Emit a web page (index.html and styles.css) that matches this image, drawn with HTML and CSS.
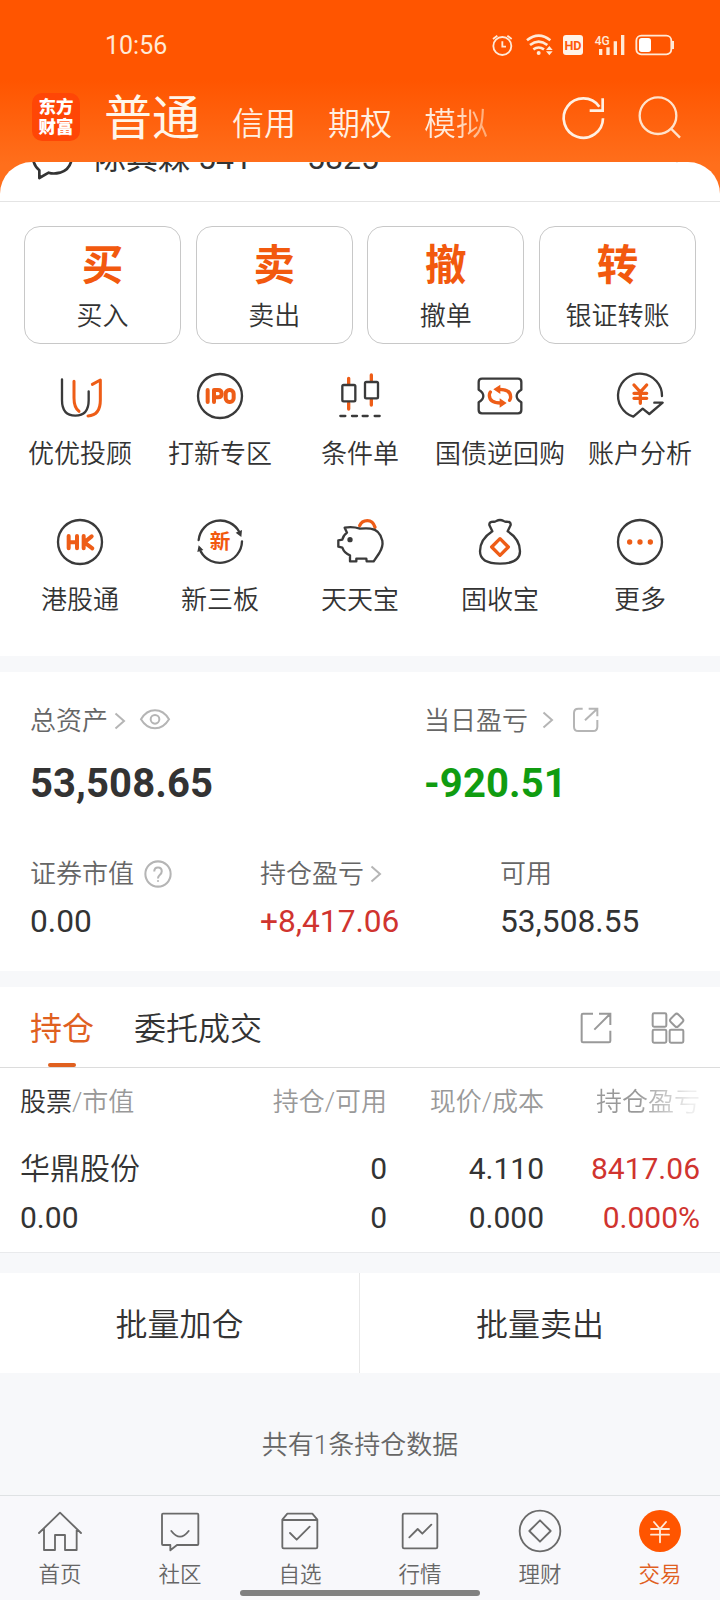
FILE: index.html
```html
<!DOCTYPE html>
<html lang="zh-CN">
<head>
<meta charset="utf-8">
<title>交易</title>
<link rel="stylesheet" href="styles.css">
</head>
<body>
<div class="phone">
  <header class="top">
    <div class="status">
      <span class="time">10:56</span>
      <svg class="status-icons" viewBox="390 90 570 90" fill="none" stroke="#ffe9d6" stroke-width="5.5">
        <circle cx="427" cy="138" r="27"/><path d="M427 124v16h11M399 117l13-10M455 117l-13-10" />
        <path d="M501 121q35-28 70 0M510 135q26-20 52 0M520 148q16-11 32 0" stroke-width="8"/>
        <circle cx="536" cy="159" r="6" fill="#ffe9d6" stroke="none"/>
        <path d="M558 150l10-12 10 12zM558 154l10 12 10-12z" fill="#ffe9d6" stroke="none"/>
        <rect x="609" y="105" width="60" height="60" rx="9" fill="#fff3e8" stroke="none"/>
        <text class="hd" x="639" y="150" text-anchor="middle">HD</text>
        <text class="g4" x="704" y="135">4G</text>
        <path d="M722 147v18M744 142v23M766 124v41M788 105v60" stroke-width="10"/>
        <rect x="829" y="107" width="105" height="56" rx="15"/>
        <rect x="837" y="114" width="36" height="42" rx="8" fill="#fff" stroke="none"/>
        <path d="M939 123v24" stroke-width="6"/>
      </svg>
    </div>
    <nav class="nav">
      <div class="logo"><span>东方</span><span>财富</span></div>
      <div class="modes">
        <span class="mode active">普通</span><span class="mode">信用</span><span class="mode">期权</span><span class="mode fade">模拟</span>
      </div>
      <svg class="nav-icon refresh" viewBox="600 280 150 150" fill="none" stroke="#fff0e2" stroke-width="8">
        <path d="M729 353A59 59 0 1 1 718 318M689 330h39v-37"/>
      </svg>
      <svg class="nav-icon" viewBox="825 280 150 150" fill="none" stroke="#ffe2cb" stroke-width="7">
        <circle cx="894" cy="345" r="55"/><path d="M933 384l27 27"/>
      </svg>
    </nav>
  </header>

  <main class="sheet">
    <div class="account">
      <svg class="chat" viewBox="90 390 132 150" fill="none" stroke="#333" stroke-width="8">
        <path d="M118 531v-23Q98 492 98 460Q98 400 156 400Q216 400 216 460Q216 505 180 515Q160 520 146 515z" stroke-linejoin="round"/>
      </svg>
      <span class="account-name">陈其森 541****5825</span>
      <svg class="down" viewBox="0 0 20 12" fill="none" stroke="#555" stroke-width="2"><path d="M1 1l9 9 9-9"/></svg>
    </div>

    <section class="actions">
      <div class="action"><b>买</b><span>买入</span></div>
      <div class="action"><b>卖</b><span>卖出</span></div>
      <div class="action"><b>撤</b><span>撤单</span></div>
      <div class="action"><b>转</b><span>银证转账</span></div>
    </section>

    <section class="tools">
      <div class="tool">
        <svg viewBox="165 483 150 150"><path class="k" d="M186 508v63q0 46 40 46 40 0 40-46v-27"/><path class="o" d="M222 514v50q0 29 15 40M264 618q37-2 37-47v-61l-24 13"/></svg>
        <span>优优投顾</span>
      </div>
      <div class="tool">
        <svg viewBox="585 483 150 150"><circle class="k" cx="660" cy="558" r="66"/><path class="o bold" d="M623 540v36M642 576v-36h12q11 0 11 11t-11 11h-12"/><rect class="o bold" x="677" y="540" width="24" height="36" rx="11"/></svg>
        <span>打新专区</span>
      </div>
      <div class="tool">
        <svg viewBox="1005 483 150 150"><path class="o fat" d="M1046 505v18M1046 579v18M1114 495v16M1114 569v16"/><rect class="k" x="1027" y="525" width="39" height="49" rx="4"/><rect class="k" x="1095" y="516" width="39" height="49" rx="4"/><path class="k" d="M1021 618h15M1056 618h15M1088 618h15M1124 618h15"/></svg>
        <span>条件单</span>
      </div>
      <div class="tool">
        <svg viewBox="345 483 150 150"><path class="k" d="M366 506h108q10 0 10 10v23q-14 8-14 19t14 19v23q0 10-10 10H366q-10 0-10-10v-23q14-8 14-19t-14-19v-23q0-10 10-10z"/><path class="o fat" d="M418 538q34 0 34 23 0 6-3 10M422 579q-34 0-34-23 0-6 3-10"/><path class="of" d="M421 524v28l-21-14zM419 565v28l21-14z"/></svg>
        <span>国债逆回购</span>
      </div>
      <div class="tool">
        <svg viewBox="765 483 150 150"><path class="k" d="M906 558a66 66 0 1 0-86 62l28-24 20 16 40-34h-25"/><path class="o fat" d="M822 525l19 21 19-21M822 550h38M822 565h38M841 547v33"/></svg>
        <span>账户分析</span>
      </div>
      <div class="tool">
        <svg viewBox="165 111 150 150"><circle class="k" cx="240" cy="186" r="66"/><path class="o bold" d="M206 168v37M206 187h25M231 168v37M251 168v37M275 169l-22 18 24 18"/></svg>
        <span>港股通</span>
      </div>
      <div class="tool">
        <svg viewBox="585 111 150 150"><path class="k" d="M596 180a65 65 0 0 1 122-24M726 184a66 66 0 0 1-124 30"/><path class="kf" d="M707 158l19-8-2 21zM592 216l4-20 14 14z"/><text class="xin" x="660" y="208" text-anchor="middle">新</text></svg>
        <span>新三板</span>
      </div>
      <div class="tool">
        <svg viewBox="1005 111 150 150"><path class="o fat" d="M1079 137q6-15 23-15t23 20"/><path class="k" d="M1080 146Q1058 139 1034 143L1041 158Q1029 167 1027 179L1015 181V200L1027 203Q1033 220 1050 226V244H1069V236H1099L1100 244H1121L1138 219Q1150 200 1147 182Q1140 150 1112 146Q1100 144 1080 146z"/><circle class="kf" cx="1050" cy="179" r="8"/></svg>
        <span>天天宝</span>
      </div>
      <div class="tool">
        <svg viewBox="345 111 150 150"><path class="k" d="M397 154l-9-19q-1-10 12-10 6 1 9-2 11-6 22 0 3 3 9 2 13 0 12 10l-9 19q37 24 37 60 0 37-60 37t-60-37q0-36 37-60z"/><path class="o fat" d="M420 176l25 25-25 25-25-25z"/></svg>
        <span>固收宝</span>
      </div>
      <div class="tool">
        <svg viewBox="765 111 150 150"><circle class="k" cx="840" cy="186" r="66"/><circle class="of" cx="809" cy="186" r="8"/><circle class="of" cx="840" cy="186" r="8"/><circle class="of" cx="871" cy="186" r="8"/></svg>
        <span>更多</span>
      </div>
    </section>

    <div class="band"></div>

    <section class="assets">
      <div class="asset-row two">
        <div>
          <div class="label">总资产<svg class="chev" viewBox="0 0 12 18"><path d="M1.5 1.5L10 9 1.5 16.5"/></svg><svg class="eye" viewBox="420 83 96 69"><path d="M426 117q16-27 42-27t42 27q-16 27-42 27t-42-27z"/><circle cx="468" cy="117" r="13"/></svg></div>
          <div class="big">53,508.65</div>
        </div>
        <div>
          <div class="label">当日盈亏<svg class="chev wide" viewBox="0 0 12 18"><path d="M1.5 1.5L10 9 1.5 16.5"/></svg><svg class="share-sm" viewBox="637 78 84 84"><path d="M669 86h-13q-13 0-13 13v41q0 13 13 13h44q13 0 13-13v-20M687 86h26v23M676 121l36-34"/></svg></div>
          <div class="big green">-920.51</div>
        </div>
      </div>
      <div class="asset-row three">
        <div>
          <div class="label">证券市值<svg class="help" viewBox="433 538 82 82"><circle cx="474" cy="579" r="37"/><path d="M463 572q0-12 11-12t11 11q0 6-6 11-5 4-5 10M474 597v5"/></svg></div>
          <div class="num">0.00</div>
        </div>
        <div>
          <div class="label">持仓盈亏<svg class="chev" viewBox="0 0 12 18"><path d="M1.5 1.5L10 9 1.5 16.5"/></svg></div>
          <div class="num red">+8,417.06</div>
        </div>
        <div>
          <div class="label">可用</div>
          <div class="num">53,508.55</div>
        </div>
      </div>
    </section>

    <div class="band"></div>

    <section class="holdings">
      <div class="tabs">
        <span class="tab on">持仓</span><span class="tab">委托成交</span>
        <svg class="tab-icon" viewBox="660 120 96 99"><path d="M699 128h-30q-4 0-4 4v78q0 4 4 4h78q4 0 4-4v-31M717 128h34v34M703 176l47-47"/></svg>
        <svg class="tab-icon grid" viewBox="873 122 102 99"><rect x="878" y="129" width="41" height="40" rx="4"/><rect x="878" y="178" width="41" height="39" rx="4"/><rect x="929" y="178" width="41" height="39" rx="4"/><rect x="934" y="134" width="32" height="32" rx="7" transform="rotate(45 950 150)"/></svg>
      </div>
      <div class="grid-row head">
        <span><em>股票</em>/市值</span><span>持仓/可用</span><span>现价/成本</span><span class="fade-head">持仓盈亏</span>
      </div>
      <div class="grid-row first"><span class="name">华鼎股份</span><span>0</span><span>4.110</span><span class="red">8417.06</span></div>
      <div class="grid-row"><span>0.00</span><span>0</span><span>0.000</span><span class="red">0.000%</span></div>
    </section>

    <div class="band tall"></div>
    <section class="batch"><span>批量加仓</span><span>批量卖出</span></section>
    <div class="summary">共有1条持仓数据</div>
  </main>

  <footer class="tabbar">
    <div class="item"><svg viewBox="114 87 132 132"><path d="M117 159l63-61 63 61M132 146v64h33v-45h30v45h35v-64"/></svg><span>首页</span></div>
    <div class="item"><svg viewBox="474 87 132 132"><path d="M489 101h103q3 0 3 3v88q0 3-3 3h-61l-20 16v-16h-22q-3 0-3-3v-88q0-3 3-3zM514 153q26 34 52 0"/></svg><span>社区</span></div>
    <div class="item"><svg viewBox="834 87 132 132"><path d="M847 119l15-18h75l15 18v82q0 4-4 4h-97q-4 0-4-4zM847 120h105M870 159l20 20 39-39"/></svg><span>自选</span></div>
    <div class="item"><svg viewBox="114 87 132 132"><rect x="128" y="101" width="104" height="104" rx="4"/><path d="M148 172l25-25 14 14 27-27"/></svg><span>行情</span></div>
    <div class="item"><svg viewBox="474 87 132 132"><circle cx="540" cy="153" r="61"/><path d="M540 121l32 32-32 32-32-32z"/></svg><span>理财</span></div>
    <div class="item current"><svg viewBox="834 87 132 132"><circle class="disc" cx="900" cy="153" r="63"/><path class="yen" d="M882 126l18 21 18-21M873 147h54M873 164h54M900 147v40"/></svg><span>交易</span></div>
    <div class="home-bar"></div>
  </footer>
</div>
</body>
</html>
```
FILE: styles.css
```css
* { box-sizing: border-box; }
body {
  margin: 0;
  font-family: Roboto, "Noto Sans CJK SC", sans-serif;
  font-weight: 350;
  color: #333;
}
svg { display: block; flex: none; }
.phone {
  width: 720px;
  height: 1600px;
  overflow: hidden;
  display: flex;
  flex-direction: column;
  background: linear-gradient(#ff5500 80px, #ff6f1c 165px, #ff6f1c 200px) no-repeat #f7f8fa;
  background-size: 100% 220px;
}

/* Status bar and account mode switcher */
.top { height: 162px; flex: none; }
.status {
  height: 90px;
  padding: 0 40px 0 105px;
  display: flex;
  align-items: center;
  justify-content: space-between;
}
.time { font-size: 25px; font-weight: 400; color: #ffe9d6; }
.status-icons { width: 190px; height: 30px; }
.hd { font: 700 38px Roboto, sans-serif; fill: #ff5a08; stroke: none; }
.g4 { font: 500 36px Roboto, sans-serif; fill: #ffe9d6; stroke: none; }
.nav { height: 72px; display: flex; align-items: center; padding: 0 35px 0 32px; }
.logo {
  width: 48px;
  height: 48px;
  margin-top: -18px;
  border-radius: 10px;
  background: #ff4606;
  color: #fff;
  display: flex;
  flex-direction: column;
  align-items: center;
  justify-content: center;
  font-size: 17.5px;
  font-weight: 900;
  line-height: 20px;
}
.modes {
  display: flex;
  align-items: baseline;
  gap: 32px;
  margin: -9px auto 0 24px;
  color: #fff0e2;
  line-height: 60px;
}
.mode { font-size: 32px; }
.mode.active { font-size: 48px; font-weight: 400; color: #fff6ea; }
.mode.fade {
  background: linear-gradient(90deg, #ffeada 45%, #ffa66f);
  background-clip: text;
  -webkit-background-clip: text;
  color: transparent;
}
.nav-icon { width: 50px; height: 50px; margin-top: -15px; }
.refresh { margin-right: 25px; }

/* White content sheet */
.sheet {
  flex: 1;
  border-radius: 32px 32px 0 0;
  overflow: hidden;
  background: #fff;
  display: flex;
  flex-direction: column;
}
.sheet > * { flex: none; }
.account {
  height: 86px;
  margin-top: -46px;
  padding: 0 33px 0 30px;
  display: flex;
  align-items: center;
  border-bottom: 1px solid #e4e4e4;
  font-size: 32px;
}
.account-name { margin: -7px auto 0 20px; font-weight: 400; white-space: nowrap; }
.chat { width: 44px; height: 50px; margin-top: -6px; }
.down { width: 20px; height: 12px; margin-top: -3px; }

.actions {
  height: 142px;
  padding: 24px 24px 0;
  display: grid;
  grid-template-columns: repeat(4, 157px);
  justify-content: space-between;
}
.action {
  height: 118px;
  border: 1px solid #c8c8c8;
  border-radius: 16px;
  display: flex;
  flex-direction: column;
  align-items: center;
  font-size: 26px;
  line-height: 36px;
}
.action b { font-size: 41.5px; font-weight: 700; line-height: 50px; color: #f2590e; margin: 14px 0 7px; }

.tools {
  height: 312px;
  padding: 27px 10px 0;
  display: grid;
  grid-template-columns: repeat(5, 140px);
  grid-auto-rows: 146px;
}
.tool { display: flex; flex-direction: column; align-items: center; font-size: 26px; line-height: 36px; white-space: nowrap; }
.tool svg { width: 50px; height: 50px; margin-bottom: 15px; }
.k, .o { fill: none; stroke: #3a3a3a; stroke-width: 7; stroke-linecap: round; stroke-linejoin: round; }
.o { stroke: #ee5d17; stroke-width: 9; }
.o.fat { stroke-width: 10; }
.o.bold { stroke-width: 12; }
.of { fill: #ee5d17; }
.kf { fill: #3a3a3a; }
.xin { font: 700 62px "Noto Sans CJK SC", sans-serif; fill: #f2590e; }

.band { height: 16px; background: #f7f8fa; }
.band.tall { height: 20px; }

/* Asset overview */
.assets { height: 299px; padding: 29px 30px 0; }
.asset-row { display: grid; }
.two { grid-template-columns: 394px 1fr; }
.three { grid-template-columns: 230px 240px 1fr; margin-top: 46px; }
.label { height: 40px; display: flex; align-items: center; font-size: 26px; line-height: 40px; color: #666; }
.label svg { fill: none; stroke: #b5b5b5; stroke-width: 6; }
.label .chev { width: 12px; height: 18px; margin-left: 6px; stroke-width: 2; }
.label .chev.wide { margin-left: 14px; margin-top: -2px; }
.eye { width: 32px; height: 23px; margin: -3px 0 0 13px; }
.share-sm { width: 28px; height: 28px; margin: -2px 0 0 18px; }
.help { width: 28px; height: 28px; margin-left: 10px; }
.big { margin-top: 19px; font-size: 40px; line-height: 48px; font-weight: 700; letter-spacing: 0.1px; }
.num { margin-top: 8px; font-size: 31.7px; line-height: 40px; font-weight: 400; }
.green { color: #109c10; }
.red { color: #d0342f; }

/* Holdings list */
.holdings { height: 266px; border-bottom: 1px solid #e9eaec; }
.tabs {
  height: 81px;
  border-bottom: 1px solid #dcdcdc;
  padding: 0 35px 0 30px;
  display: flex;
  align-items: center;
  font-size: 32px;
}
.tab { margin-right: 40px; height: 80px; line-height: 84px; position: relative; }
.tab + .tab { margin-right: auto; }
.tab.on { color: #e0601f; font-weight: 400; }
.tab.on::after {
  content: "";
  position: absolute;
  left: 18px;
  bottom: 0;
  width: 28px;
  height: 4px;
  border-radius: 2px;
  background: #e0601f;
}
.tab-icon { width: 32px; height: 33px; fill: none; stroke: #999; stroke-width: 6; }
.tab-icon.grid { width: 34px; margin-left: 39px; }
.grid-row {
  padding: 0 20px;
  display: grid;
  grid-template-columns: 207px 160px 157px 156px;
  font-size: 30px;
  line-height: 48px;
  font-weight: 400;
}
.grid-row span { text-align: right; }
.grid-row span:first-child { text-align: left; }
.grid-row .name { font-weight: 350; }
.grid-row.head { font-size: 26px; line-height: 68px; color: #999; font-weight: 350; }
.head em { font-style: normal; color: #333; }
.head .fade-head {
  background: linear-gradient(90deg, #999 60%, #eee 94%);
  background-clip: text;
  -webkit-background-clip: text;
  color: transparent;
}
.grid-row.first { margin: 9px 0 1px; }

.batch { height: 100px; display: grid; grid-template-columns: 360px 360px; font-size: 32px; line-height: 104px; text-align: center; }
.batch span:first-child { border-right: 1px solid #e8e8e8; }
.summary { flex: 1 0 0; background: #f7f8fa; text-align: center; font-size: 26px; line-height: 145px; color: #666; }

/* Bottom navigation */
.tabbar {
  position: relative;
  flex: none;
  height: 105px;
  border-top: 1px solid #dfe2e4;
  background: #f8f8fb;
  display: grid;
  grid-template-columns: repeat(6, 120px);
  padding-top: 13px;
}
.item { display: flex; flex-direction: column; align-items: center; font-size: 21.5px; line-height: 30px; color: #666; }
.item svg { width: 44px; height: 44px; margin-bottom: 7px; fill: none; stroke: #6a6a6a; stroke-width: 5.5; stroke-linejoin: round; stroke-linecap: round; }
.item .disc { fill: #ff5500; stroke: none; }
.item .yen { stroke: #ffe9d6; }
.item.current { color: #e0601f; }
.home-bar { position: absolute; left: 240px; bottom: 4px; width: 240px; height: 6px; border-radius: 3px; background: #808080; }
```
